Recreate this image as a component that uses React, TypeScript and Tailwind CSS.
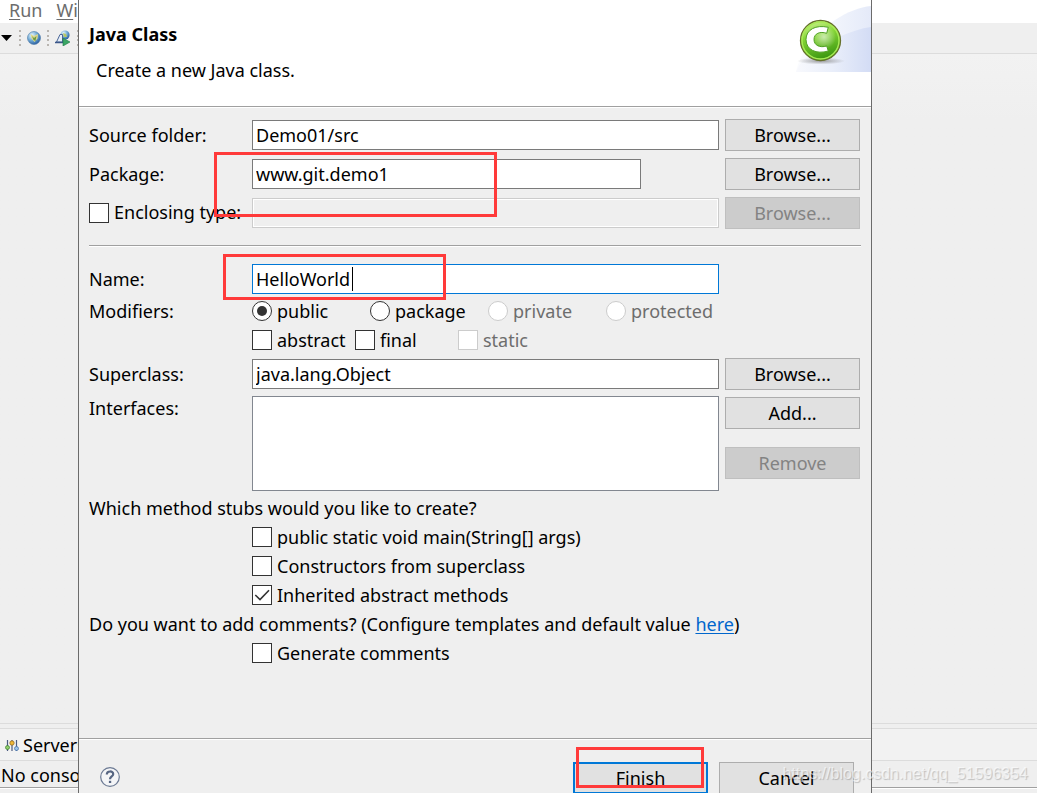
import { useState } from "react";
import type { ComponentProps, ReactNode } from "react";

const field =
  "h-[30px] w-full min-w-0 rounded-none border bg-white px-[3px] outline-none";

function PushButton({ primary, ...rest }: ComponentProps<"button"> & { primary?: boolean }) {
  return (
    <button
      type="button"
      className={`h-8 w-[135px] bg-[#e1e1e1] text-center disabled:border-[#bfbfbf] disabled:bg-[#cccccc] disabled:text-[#838383] ${primary ? "border-2 border-[#0078d7]" : "border border-[#adadad]"}`}
      {...rest}
    />
  );
}

type ChoiceProps = {
  type: "checkbox" | "radio";
  name?: string;
  disabled?: boolean;
  defaultChecked?: boolean;
  children: ReactNode;
};

function Choice({ type, children, disabled, ...rest }: ChoiceProps) {
  return (
    <label
      className={`mb-px flex h-7 items-center gap-[5px] whitespace-nowrap ${disabled ? "text-[#6d6d6d]" : ""}`}
    >
      <span className="grid size-5 shrink-0 place-items-center">
        <input
          type={type}
          disabled={disabled}
          className={`peer col-start-1 row-start-1 size-5 appearance-none border border-[#333333] bg-white disabled:border-[#cccccc] ${type === "radio" ? "rounded-full" : ""}`}
          {...rest}
        />
        {type === "radio" ? (
          <span className="pointer-events-none col-start-1 row-start-1 hidden size-[10px] rounded-full bg-[#333333] peer-checked:block" />
        ) : (
          <svg
            viewBox="0 0 20 20"
            className="pointer-events-none col-start-1 row-start-1 hidden size-5 peer-checked:block"
            fill="none"
            stroke="#333333"
            strokeWidth="1.6"
          >
            <path d="M3.3 10 L8 14.5 L17 5.2" />
          </svg>
        )}
      </span>
      {children}
    </label>
  );
}

function Row({ children, className = "" }: { children: ReactNode; className?: string }) {
  return (
    <div
      className={`grid grid-cols-[157px_minmax(0,1fr)_135px] items-center gap-x-[6px] ${className}`}
    >
      {children}
    </div>
  );
}

function Grip() {
  return (
    <svg viewBox="0 0 2 16" className="h-4 w-[2px] shrink-0" fill="#b9b5b0">
      <rect y="0" width="2" height="2" />
      <rect y="5" width="2" height="2" />
      <rect y="9" width="2" height="2" />
      <rect y="14" width="2" height="2" />
    </svg>
  );
}

function Toolbar() {
  return (
    <div className="flex h-[31px] items-center border-b border-[#dcdcdc] bg-[#efefef] pl-[1px]">
      <svg viewBox="0 0 12 6" className="h-[6px] w-3">
        <path d="M0 0 H11 L5.5 6 Z" fill="#000" />
      </svg>
      <div className="ml-[6px] flex items-center gap-[6px]">
        <Grip />
        <svg viewBox="0 0 14 14" className="size-[14px]">
          <defs>
            <radialGradient id="globe" cx="0.35" cy="0.3" r="0.8">
              <stop offset="0" stopColor="#e8f6ff" />
              <stop offset="0.5" stopColor="#6fa9d4" />
              <stop offset="1" stopColor="#1d4f94" />
            </radialGradient>
          </defs>
          <circle cx="7" cy="7" r="6.5" fill="url(#globe)" stroke="#4a78a8" strokeWidth="0.6" />
          <path d="M3.500 3 L7 5 L11 3 L10.500 7.500 L7.500 11 L4.500 7.500 Z" fill="#e0d98a" />
          <path d="M5 5 L7 7 L9.500 5 L8.500 10 L6.500 9 Z" fill="#6f9a46" />
        </svg>
        <Grip />
        <svg viewBox="0 0 16 16" className="size-4">
          <circle cx="10" cy="5" r="4.6" fill="url(#globe)" />
          <path d="M8 3 L11 4 L12 7 L9 7 Z" fill="#b9c867" />
          <path d="M1.500 12 L5 4.500 H7.500 V12 Z" fill="#e6eef8" stroke="#4a6698" />
          <path d="M0 12.500 H9" stroke="#3a5689" strokeWidth="1.500" />
          <path d="M8 8 L15 12 L8 16 Z" fill="#3aa564" stroke="#1d7a44" strokeWidth="0.6" />
        </svg>
        <Grip />
      </div>
    </div>
  );
}

function Workbench() {
  return (
    <div className="flex h-full flex-col">
      <div className="flex h-[23px] items-center gap-[14px] bg-white pb-1 pl-[9px] leading-5 text-[#6d6d6d]">
        <span>
          <u className="underline-offset-2">R</u>un
        </span>
        <span>
          <u className="underline-offset-2">W</u>indow
        </span>
      </div>
      <Toolbar />
      <div className="grow border-b border-[#dcdcdc] bg-linear-to-b from-[#f2f2f2] to-[#efefef] to-10%" />
      <div className="mt-1 flex h-[33px] items-center gap-1 border-y border-[#dcdcdc] bg-[#f2f2f2] pt-[2px] pl-[5px]">
        <svg viewBox="0 0 14 14" className="size-[14px]">
          <path d="M2.5 1 V12 M7 1 V12 M11.500 1 V12" stroke="#4b5a80" strokeWidth="1.2" />
          <circle cx="2.500" cy="8.500" r="2" fill="#8fd06a" stroke="#3c7a2c" strokeWidth="0.7" />
          <circle cx="7" cy="4" r="2.200" fill="#f0b83a" stroke="#8a6014" strokeWidth="0.7" />
          <circle cx="11.500" cy="9.500" r="2" fill="#9cc4ee" stroke="#3f6da6" strokeWidth="0.7" />
        </svg>
        Servers
      </div>
      <div className="flex h-[27px] items-center border-b border-[#a0a0a0] pt-[2px] pl-[1px]">No consoles</div>
      <div className="h-[5px] border-t border-white" />
    </div>
  );
}

function ClassBanner() {
  return (
    <svg viewBox="0 0 76 68" className="mt-[4px] h-[68px] w-[76px]">
      <defs>
        <linearGradient id="wash" x1="0" x2="1">
          <stop offset="0" stopColor="#f8f9fd" />
          <stop offset="0.5" stopColor="#e9eefa" />
          <stop offset="1" stopColor="#d3dcf5" />
        </linearGradient>
        <linearGradient id="ball" x1="0" y1="0" x2="0.3" y2="1">
          <stop offset="0" stopColor="#d8f5a0" />
          <stop offset="0.45" stopColor="#86d636" />
          <stop offset="1" stopColor="#3f9a12" />
        </linearGradient>
        <radialGradient id="glow" cx="0.5" cy="0.5" r="0.5">
          <stop offset="0" stopColor="#fff" stopOpacity="0.6" />
          <stop offset="1" stopColor="#fff" stopOpacity="0" />
        </radialGradient>
        <radialGradient id="shade">
          <stop offset="0" stopColor="#777" stopOpacity="0.7" />
          <stop offset="1" stopColor="#777" stopOpacity="0" />
        </radialGradient>
      </defs>
      <path d="M1 68 C4 50 20 30 40 16 C52 8 65 3 76 2 V68 Z" fill="url(#wash)" opacity="0.6" />
      <path d="M1 68 C8 50 30 38 46 32 C56 28 66 24 76 23 V68 Z" fill="url(#wash)" />
      <ellipse cx="26" cy="57" rx="24" ry="3.500" fill="url(#shade)" />
      <circle cx="25.500" cy="36.500" r="20" fill="url(#ball)" stroke="#66702c" strokeWidth="1.300" />
      <circle cx="25.500" cy="36.500" r="18.500" fill="none" stroke="#a8ea55" strokeWidth="1.400" />
      <circle cx="29" cy="33" r="12" fill="url(#glow)" />
      <path
        d="M33.300 23.300 C21 20.500 11 25.500 11 35.500 C11 46 21.500 50.500 33.300 47 L31.700 42 C25 44 19 41.500 19 35.500 C19 29.500 25 27 31.700 29.300 Z"
        fill="#fff"
        stroke="#4fa024"
        strokeWidth="1"
      />
    </svg>
  );
}

function Marker({ className }: { className: string }) {
  return <div className={`pointer-events-none absolute border-[3px] border-[#ff3a3a] ${className}`} />;
}

function ClassWizard() {
  const [name, setName] = useState("HelloWorld");
  return (
    <section
      role="dialog"
      aria-labelledby="wizard-title"
      className="absolute inset-y-0 right-[165px] left-[78px] flex flex-col border-x border-[#6b6b6b] bg-[#efefef]"
    >
      <header className="flex h-[107px] shrink-0 justify-between border-b border-[#a0a0a0] bg-white">
        <div className="flex flex-col gap-3 pt-[22px] pl-[10px]">
          <h1 id="wizard-title" className="leading-6 font-bold">
            Java Class
          </h1>
          <p className="pl-[7px] leading-6">Create a new Java class.</p>
        </div>
        <ClassBanner />
      </header>

      <form className="flex grow flex-col border-t border-white pt-[11px] pr-[11px] pl-[10px]">
        <div className="flex flex-col gap-[7px]">
          <Row>
            <label htmlFor="source">Source folder:</label>
            <input id="source" defaultValue="Demo01/src" className={`${field} border-[#7a7a7a]`} />
            <PushButton>Browse...</PushButton>
          </Row>
          <Row>
            <label htmlFor="package">Package:</label>
            <div className="pr-[78px]">
              <input id="package" defaultValue="www.git.demo1" className={`${field} block border-[#7a7a7a]`} />
            </div>
            <PushButton>Browse...</PushButton>
          </Row>
          <Row>
            <Choice type="checkbox">Enclosing type:</Choice>
            <input
              aria-label="Enclosing type"
              disabled
              className="h-[30px] w-full min-w-0 border border-[#cccccc] bg-[#efefef] ring-1 ring-white ring-inset"
            />
            <PushButton disabled>Browse...</PushButton>
          </Row>
        </div>

        <hr className="mt-4 -mr-px h-[2px] border-t border-b border-t-[#a0a0a0] border-b-white" />

        <Row className="mt-[17px]">
          <label htmlFor="name">Name:</label>
          <div className="relative">
            <input
              id="name"
              value={name}
              onChange={(e) => setName(e.target.value)}
              className={`${field} block border-[#0078d7] caret-transparent`}
            />
            <span className="absolute top-[3px] left-[100px] h-6 w-px bg-black" />
          </div>
        </Row>

        <Row className="mt-[3px]">
          <span>Modifiers:</span>
          <div className="grid grid-cols-[118px_118px_118px_auto]">
            <Choice type="radio" name="access" defaultChecked>public</Choice>
            <Choice type="radio" name="access">package</Choice>
            <Choice type="radio" name="access" disabled>private</Choice>
            <Choice type="radio" name="access" disabled>protected</Choice>
          </div>
        </Row>
        <div className="grid grid-cols-[103px_103px_auto] pl-[163px]">
          <Choice type="checkbox">abstract</Choice>
          <Choice type="checkbox">final</Choice>
          <Choice type="checkbox" disabled>static</Choice>
        </div>

        <Row className="mt-[3px]">
          <label htmlFor="superclass">Superclass:</label>
          <input id="superclass" defaultValue="java.lang.Object" className={`${field} border-[#7a7a7a]`} />
          <PushButton>Browse...</PushButton>
        </Row>

        <Row className="mt-[6px]">
          <label htmlFor="interfaces" className="self-start leading-6">Interfaces:</label>
          <textarea
            id="interfaces"
            className="block h-[95px] w-full resize-none border border-[#828790] bg-white outline-none"
          />
          <div className="flex flex-col gap-[18px] self-start pt-px">
            <PushButton>Add...</PushButton>
            <PushButton disabled>Remove</PushButton>
          </div>
        </Row>

        <p className="mt-[3px] leading-[29px]">Which method stubs would you like to create?</p>
        <div className="pl-[163px]">
          <Choice type="checkbox">public static void main(String[] args)</Choice>
          <Choice type="checkbox">Constructors from superclass</Choice>
          <Choice type="checkbox" defaultChecked>Inherited abstract methods</Choice>
        </div>
        <p className="leading-[29px]">
          Do you want to add comments? (Configure templates and default value{" "}
          <a href="#templates" className="text-[#0066cc] underline underline-offset-2">here</a>)
        </p>
        <div className="pl-[163px]">
          <Choice type="checkbox">Generate comments</Choice>
        </div>
      </form>

      <footer className="flex h-[55px] shrink-0 items-start border-t border-[#a0a0a0] pr-[17px] pl-[21px] shadow-[inset_0_1px_0_#fff]">
        <button type="button" aria-label="Help" className="mt-7">
          <svg viewBox="0 0 20 20" className="size-5" fill="none">
            <circle cx="10" cy="10" r="9.300" stroke="#6c7a94" strokeWidth="1.200" fill="#f4f5f7" />
            <path
              d="M6.800 7.600 C6.800 3.400 13.400 3.600 13.200 7.200 C13.100 9.400 10 9.600 10 12.200"
              stroke="#566582"
              strokeWidth="2.200"
            />
            <rect x="8.900" y="13.800" width="2.300" height="2.200" fill="#566582" />
          </svg>
        </button>
        <div className="mt-[23px] ml-auto flex gap-[11px]">
          <PushButton primary>Finish</PushButton>
          <PushButton>Cancel</PushButton>
        </div>
      </footer>
    </section>
  );
}

export default function App() {
  return (
    <main className="relative h-screen overflow-hidden bg-[#efefef] font-['Noto_Sans','Open_Sans',sans-serif] text-[18px] text-black">
      <Workbench />
      <ClassWizard />
      <Marker className="top-[152px] left-[214px] h-[65px] w-[283px]" />
      <Marker className="top-[254px] left-[223px] h-[46px] w-[223px]" />
      <Marker className="top-[747px] left-[576px] h-[41px] w-32" />
      <p className="pointer-events-none absolute right-[9px] bottom-[7px] font-['Liberation_Sans',sans-serif] text-base text-white/60 [text-shadow:1px_1px_1px_rgba(0,0,0,0.2)]">
        https://blog.csdn.net/qq_51596354
      </p>
    </main>
  );
}
